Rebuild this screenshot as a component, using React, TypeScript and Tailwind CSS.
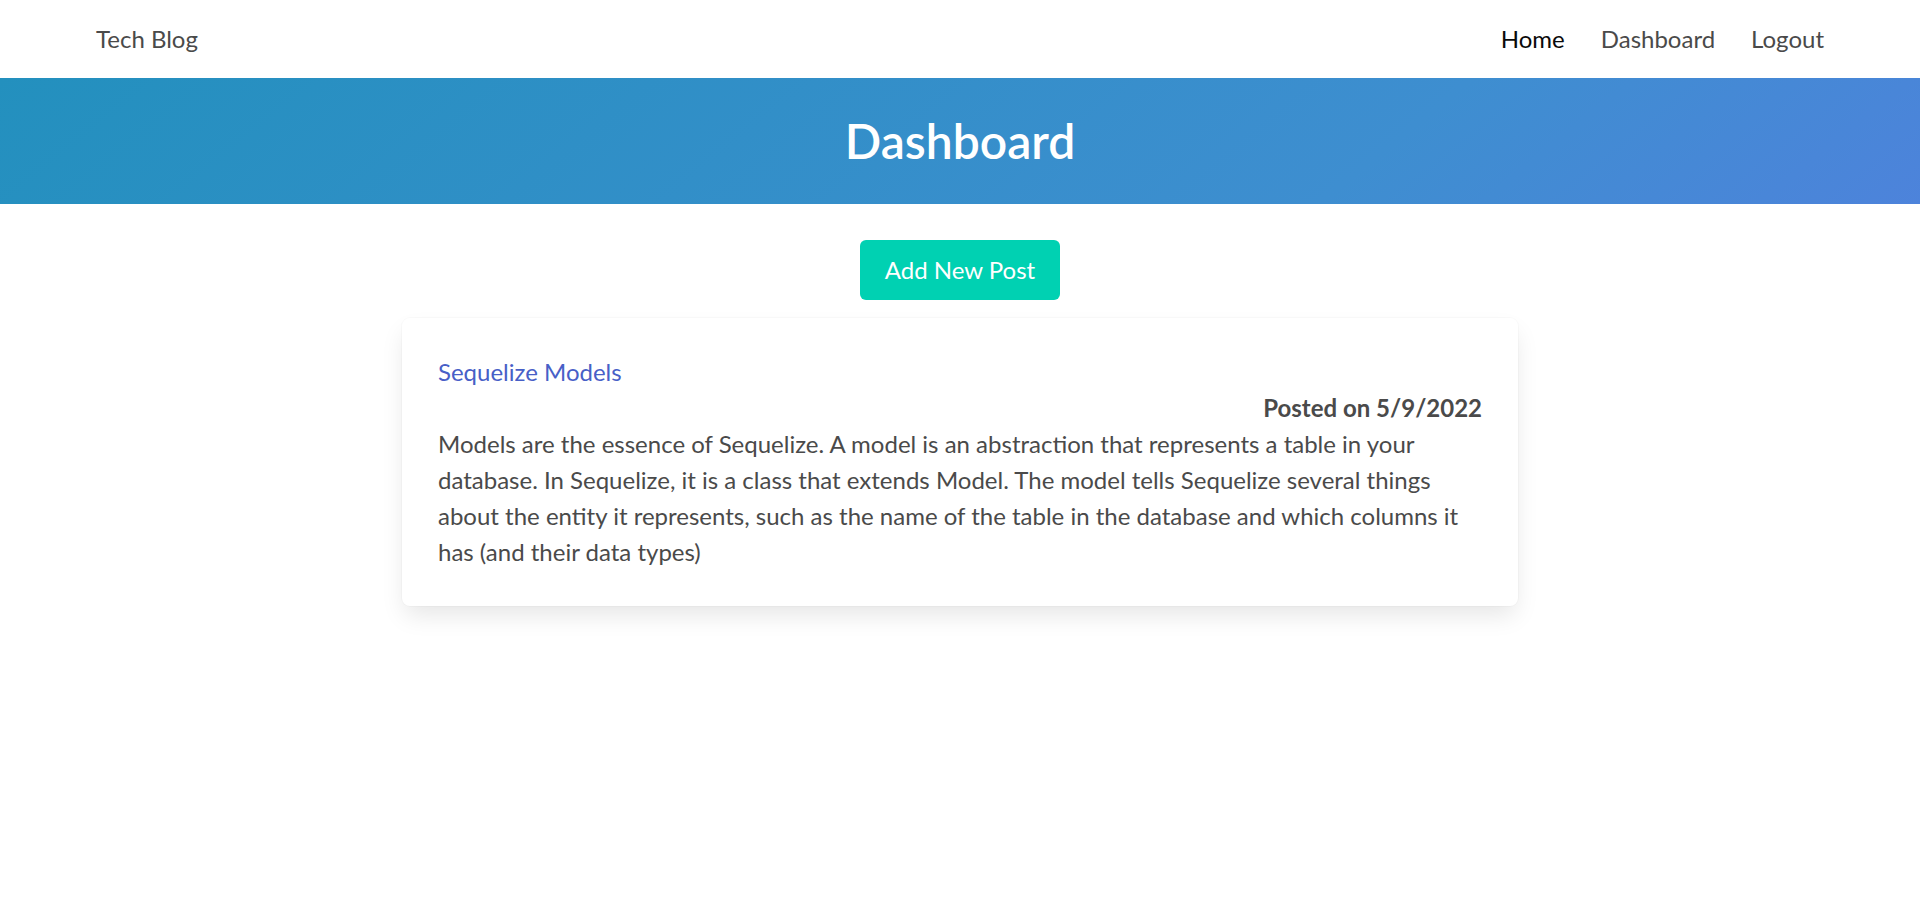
const font = { fontFamily: "Lato, 'Noto Sans', sans-serif" };

function Navbar() {
    return (
        <nav className="h-[78px] bg-white flex items-center justify-between px-[78px] text-[24px] text-[#4a4a4a]">
            <a className="px-[18px] leading-[36px]">Tech Blog</a>
            <div className="flex items-center">
                <a className="px-[18px] leading-[36px] text-[#0a0a0a]">Home</a>
                <a className="px-[18px] leading-[36px]">Dashboard</a>
                <a className="px-[18px] leading-[36px]">Logout</a>
            </div>
        </nav>
    );
}

export default function App() {
    return (
        <div className="min-h-screen bg-white" style={font}>
            <Navbar />
            <section className="bg-[linear-gradient(141deg,#2390be_0%,#3e8ed0_71%,#4d83db_100%)] py-[36px]">
                <h1 className="text-center text-white text-[48px] leading-[54px] font-semibold">Dashboard</h1>
            </section>
            <div className="flex justify-center mt-[36px]">
                <button className="w-[200px] h-[60px] rounded-[6px] bg-[#00d1b2] text-white text-[24px]">
                    Add New Post
                </button>
            </div>
            <div className="mt-[18px] w-[1116px] mx-auto bg-white rounded-[8px] shadow-[0_12px_24px_-3px_rgba(10,10,10,0.1),0_0_0_1px_rgba(10,10,10,0.02)]">
                <div className="p-[36px] text-[24px] leading-[36px] text-[#4a4a4a]">
                    <a className="text-[#485fc7]">Sequelize Models</a>
                    <p className="text-right font-bold">Posted on 5/9/2022</p>
                    <p>
                        Models are the essence of Sequelize. A model is an abstraction that represents a table in your database. In Sequelize, it is a class that extends Model. The model tells Sequelize several things about the entity it represents, such as the name of the table in the database and which columns it has (and their data types)
                    </p>
                </div>
            </div>
        </div>
    );
}
